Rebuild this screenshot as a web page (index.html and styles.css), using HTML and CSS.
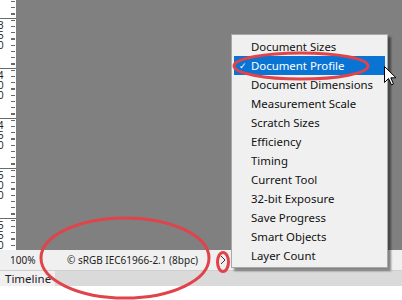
FILE: index.html
```html
<!DOCTYPE html>
<html>
<head>
<meta charset="utf-8">
<link rel="stylesheet" href="styles.css">
</head>
<body>
<div class="app">
  <div class="work">
    <div class="ruler">
      <div class="seg"><span>3</span><span>5</span><span>0</span></div>
      <div class="seg"><span>4</span><span>0</span><span>0</span></div>
      <div class="seg"><span>4</span><span>5</span><span>0</span></div>
      <div class="seg"><span>5</span><span>0</span><span>0</span></div>
      <div class="seg"><span>5</span><span>5</span><span>0</span></div>
    </div>
    <div class="canvas"></div>
  </div>
  <div class="status">
    <span class="zoom">100%</span>
    <span class="profile">© sRGB IEC61966-2.1 (8bpc)</span>
    <svg class="chev" width="6" height="10" viewBox="0 0 6 10"><polyline points="1,1 5,5 1,9" fill="none" stroke="#333" stroke-width="1"/></svg>
  </div>
  <div class="panel">
    <div class="tab">Timeline</div>
  </div>
  <div class="blank"></div>

  <ul class="menu">
    <li>Document Sizes</li>
    <li class="active"><span class="check">✓</span>Document Profile</li>
    <li>Document Dimensions</li>
    <li>Measurement Scale</li>
    <li>Scratch Sizes</li>
    <li>Efficiency</li>
    <li>Timing</li>
    <li>Current Tool</li>
    <li>32-bit Exposure</li>
    <li>Save Progress</li>
    <li>Smart Objects</li>
    <li>Layer Count</li>
  </ul>

  <svg class="cursor" width="13" height="20" viewBox="0 0 13 20">
    <path d="M0.5,0.5 L0.5,16.5 L4.5,12.5 L7.5,19 L9.5,18 L6.8,11.8 L12,11.8 Z" fill="#fff" stroke="#000" stroke-width="1" stroke-linejoin="miter"/>
  </svg>

  <svg class="marks" width="402" height="300" viewBox="0 0 402 300">
    <ellipse cx="301" cy="66" rx="67" ry="13" fill="none" stroke="#e0434a" stroke-width="3"/>
    <ellipse cx="125" cy="258" rx="84" ry="40" fill="none" stroke="#e0434a" stroke-width="3"/>
    <ellipse cx="223" cy="262" rx="5.5" ry="9.5" fill="none" stroke="#e0434a" stroke-width="3"/>
  </svg>
</div>
</body>
</html>
```
FILE: styles.css
```css
html, body {
  margin: 0;
  padding: 0;
  background: #fff;
}
.app {
  position: relative;
  width: 402px;
  height: 300px;
  overflow: hidden;
  display: flex;
  flex-direction: column;
  font-family: "Noto Sans", "Open Sans", sans-serif;
}
.work {
  display: flex;
  height: 250px;
}
.ruler {
  width: 16px;
  background-color: #fff;
  background-image: repeating-linear-gradient(to bottom, #6a6a6a 0, #6a6a6a 1px, transparent 1px, transparent 6.25px);
  background-size: 4px 100%;
  background-position: 11px 1px;
  background-repeat: no-repeat;
  padding-top: 18px;
  box-sizing: border-box;
  overflow: hidden;
  display: flex;
  flex-direction: column;
}
.seg {
  flex: 0 0 50px;
  border-top: 1px solid #6a6a6a;
  box-sizing: border-box;
  display: flex;
  flex-direction: column;
  padding-top: 2px;
  margin-left: -2px;
  font-family: "Liberation Sans", sans-serif;
  font-size: 10px;
  line-height: 10px;
  color: #222;
}
.canvas {
  flex: 1;
  background: #808080;
}
.status {
  height: 20px;
  background: #f0f0f0;
  display: flex;
  align-items: center;
  font-size: 10px;
  color: #222;
}
.zoom {
  margin-left: 10px;
  width: 57px;
}
.profile {
  width: 152px;
  white-space: nowrap;
}
.chev {
  margin-left: 1px;
}
.panel {
  height: 15px;
  background: #dadada;
  border-top: 1px solid #cfcfcf;
  display: flex;
  overflow: hidden;
}
.tab {
  width: 55px;
  background: #f0f0f0;
  font-size: 11.5px;
  line-height: 12px;
  padding: 2px 0 0 5px;
  box-sizing: border-box;
  color: #222;
}
.blank {
  flex: 1;
  background: #fff;
}
.menu {
  position: absolute;
  left: 231px;
  top: 34px;
  width: 157px;
  margin: 0;
  padding: 2px 2px;
  box-sizing: border-box;
  list-style: none;
  background: #f0f0f0;
  border: 1px solid #a8a8a8;
  box-shadow: 3px 3px 2px rgba(0, 0, 0, 0.45);
  font-size: 11.4px;
  color: #111;
}
.menu li {
  height: 19px;
  line-height: 19px;
  padding-left: 17px;
  position: relative;
  white-space: nowrap;
}
.menu li.active {
  background: #0a74d4;
  color: #fff;
}
.check {
  position: absolute;
  left: 5px;
  top: 0;
  font-size: 9px;
}
.cursor {
  position: absolute;
  left: 384px;
  top: 66px;
}
.marks {
  position: absolute;
  left: 0;
  top: 0;
  pointer-events: none;
}
```
